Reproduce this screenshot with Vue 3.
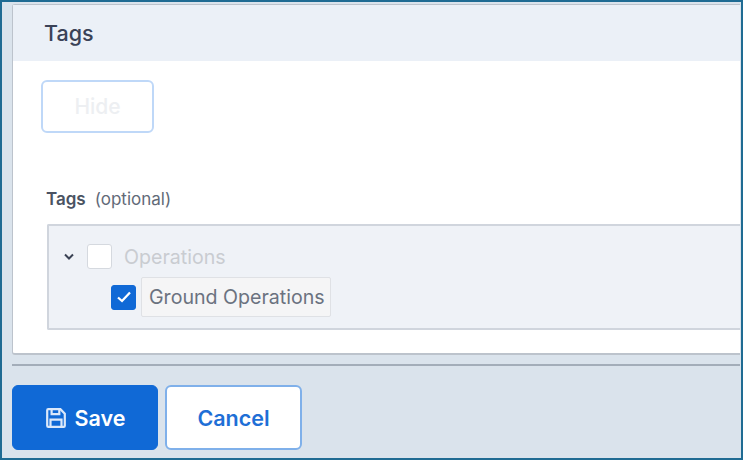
<script setup>
const saveLabel = 'Save'
const cancelLabel = 'Cancel'
</script>

<template>
  <div class="frame">
    <section class="card">
      <header class="card-head">Tags</header>
      <div class="card-body">
        <button class="hide-btn" type="button">Hide</button>
        <div class="field-label"><strong>Tags</strong><span>(optional)</span></div>
        <div class="tree">
          <div class="row">
            <svg class="chevron" width="10" height="8" viewBox="0 0 10 8">
              <path d="M1 1.500 5 5.500 9 1.500" fill="none" stroke="#3a4254" stroke-width="2" />
            </svg>
            <span class="check"></span>
            <span class="parent-name">Operations</span>
          </div>
          <div class="row child">
            <span class="check on">
              <svg width="18" height="18" viewBox="0 0 18 18">
                <path d="M3 9.500 7 13 15 4.500" fill="none" stroke="#fff" stroke-width="2.300" />
              </svg>
            </span>
            <span class="chip">Ground Operations</span>
          </div>
        </div>
      </div>
    </section>
    <div class="rule"></div>
    <footer class="actions">
      <button class="btn primary" type="button">
        <svg width="22" height="22" viewBox="0 0 20 20" fill="none" stroke="#dbe8fa" stroke-width="2">
          <path d="M2 3a1 1 0 0 1 1-1h11l4 4v11a1 1 0 0 1-1 1H3a1 1 0 0 1-1-1z" />
          <path d="M6 2v4.500h7V2M5 18v-6.500h10V18" />
        </svg>
        {{ saveLabel }}
      </button>
      <button class="btn secondary" type="button">{{ cancelLabel }}</button>
    </footer>
  </div>
</template>

<style scoped>
.frame {
  width: 743px;
  height: 460px;
  box-sizing: border-box;
  border: 2px solid #1f6b93;
  background: #dae3ec;
  padding: 2px 1px 0 10px;
  overflow: hidden;
  font-family: Inter, "Liberation Sans", sans-serif;
}

.card {
  height: 351px;
  box-sizing: border-box;
  background: #fff;
  border: 1px solid #bcc3cc;
  border-width: 1px 0 2px 1px;
  border-radius: 3px 0 0 3px;
}

.card-head {
  height: 56px;
  padding: 0 0 0 31px;
  display: flex;
  align-items: center;
  background: #ebf0f7;
  color: #3a4257;
  font-size: 21.5px;
  font-weight: 500;
}

.card-body {
  padding: 19px 0 0 28px;
}

.hide-btn {
  display: block;
  width: 113px;
  height: 53px;
  background: #fff;
  border: 2px solid #bfd8f8;
  border-radius: 6px;
  color: #edeff2;
  font: 500 21px Inter, "Liberation Sans", sans-serif;
}

.field-label {
  margin: 54px 0 0 5px;
  display: flex;
  gap: 9px;
  align-items: center;
  height: 24px;
  font-size: 17px;
  color: #626a78;
}

.field-label strong {
  font-weight: 600;
  color: #4a5262;
}

.tree {
  margin: 13px 0 0 6px;
  height: 106px;
  box-sizing: border-box;
  background: #eff2f7;
  border: 2px solid #d0d5dd;
  border-right: 0;
  border-radius: 2px 0 0 2px;
  padding: 18px 0 0 15px;
}

.row {
  display: flex;
  align-items: center;
}

.chevron {
  margin-right: 13px;
}

.check {
  width: 25px;
  height: 25px;
  box-sizing: border-box;
  display: flex;
  align-items: center;
  justify-content: center;
  background: #fff;
  border: 1px solid #d5d9df;
  border-radius: 3px;
}

.check.on {
  background: #1069d6;
  border-color: #1069d6;
}

.parent-name {
  margin-left: 12px;
  font-size: 19.6px;
  color: #c9ccd1;
}

.child {
  margin: 8px 0 0 47px;
}

.chip {
  margin-left: 5px;
  height: 40px;
  box-sizing: border-box;
  padding: 0 5px 0 7px;
  display: flex;
  align-items: center;
  background: #f5f5f6;
  border: 1px solid #dfe1e5;
  border-radius: 2px;
  font-size: 19.6px;
  color: #6b7280;
}

.rule {
  height: 2px;
  margin-top: 9px;
  background: #a3adb9;
}

.actions {
  margin-top: 19px;
  display: flex;
  gap: 7px;
}

.btn {
  height: 65px;
  box-sizing: border-box;
  display: flex;
  align-items: center;
  justify-content: center;
  gap: 8px;
  border-radius: 6px;
  font: 600 21.5px Inter, "Liberation Sans", sans-serif;
}

.primary {
  width: 146px;
  background: #1069d6;
  border: 1px solid #1069d6;
  color: #fff;
}

.secondary {
  width: 137px;
  background: #fff;
  border: 2px solid #7fb0ea;
  color: #1f6fd6;
}
</style>
